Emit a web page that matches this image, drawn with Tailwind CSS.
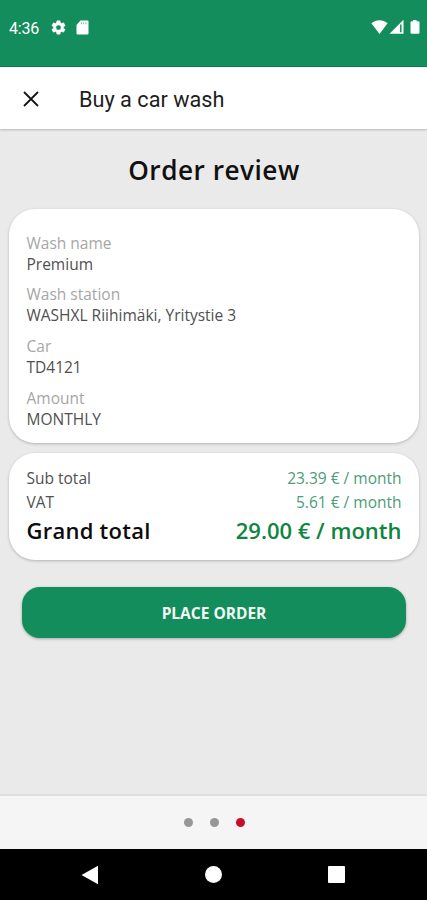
<!DOCTYPE html>
<html lang="en">
<head>
<meta charset="utf-8">
<meta name="viewport" content="width=device-width, initial-scale=1">
<title>Buy a car wash</title>
<script src="https://cdn.jsdelivr.net/npm/@tailwindcss/browser@4"></script>
</head>
<body class="font-['Open_Sans',sans-serif] bg-[#eaeaea]">
<div class="flex h-[900px] w-[427px] flex-col overflow-hidden bg-[#eaeaea] text-[15.5px] text-[#505050]">
  <header class="flex h-[67px] shrink-0 items-start justify-between bg-[#138d5b] pt-[18px] pr-[6px] pl-[9px] text-white shadow-[inset_0_-1px_0_#0f7f50]">
    <div class="flex items-center">
      <span class="w-[40px] pt-px font-['Roboto',sans-serif] text-[16px] leading-[19px] tracking-[-0.2px]">4:36</span>
      <svg class="-mt-px ml-px h-[17px] w-[17px]" viewBox="0 0 24 24" fill="currentColor"><path d="M19.14 12.94c.04-.3.06-.61.06-.94s-.02-.64-.07-.94l2.03-1.58a.49.49 0 0 0 .12-.61l-1.92-3.32a.49.49 0 0 0-.59-.22l-2.39.96a7 7 0 0 0-1.62-.94l-.36-2.54A.48.48 0 0 0 13.920 2.400h-3.840a.48.48 0 0 0-.47.41l-.36 2.54c-.59.24-1.130.57-1.620.94l-2.390-.96a.48.48 0 0 0-.59.22L2.740 8.870a.48.48 0 0 0 .12.61l2.030 1.580c-.05.3-.09.63-.09.94s.02.64.07.94l-2.030 1.580a.49.49 0 0 0-.12.61l1.920 3.320c.12.22.37.29.59.22l2.390-.96c.5.38 1.030.7 1.620.94l.36 2.540c.05.24.24.41.47.41h3.840c.24 0 .44-.17.47-.41l.36-2.540c.59-.24 1.130-.56 1.620-.94l2.390.96c.22.08.47 0 .59-.22l1.920-3.320a.48.48 0 0 0-.12-.61zM12 15.600a3.600 3.600 0 1 1 0-7.200 3.600 3.600 0 0 1 0 7.200z" stroke="currentColor" stroke-width=".6"/></svg>
      <svg class="-mt-[2px] ml-[9px] h-[15px] w-[13px]" viewBox="0 0 13 15"><path d="M4.500.5h7a1 1 0 0 1 1 1v12a1 1 0 0 1-1 1h-10a1 1 0 0 1-1-1V5z" fill="#fff"/><path d="M5.500 2.300v2M7.700 2.300v2M9.900 2.300v2" stroke="#7fbfa3" stroke-width="1"/></svg>
    </div>
    <div class="flex items-center pt-px">
      <svg class="h-[16px] w-[17px]" viewBox="0 0 17 16"><path d="M8.500 15L.4 4.300C5 .2 12 .2 16.600 4.300z" fill="#fff"/></svg>
      <svg class="ml-px h-[16px] w-[15px]" viewBox="0 0 15 16"><path d="M14.500.8v14H.5z" fill="#fff"/><path d="M11.800 5.500v7.800" stroke="#138d5b" stroke-width="1.500"/></svg>
      <svg class="ml-[6px] h-[16px] w-[11px]" viewBox="0 0 11 16"><path d="M3 .9h3.500v1.300h2a1 1 0 0 1 1 1v10.600a1 1 0 0 1-1 1H1.500a1 1 0 0 1-1-1V3.200a1 1 0 0 1 1-1H3z" fill="#fff"/></svg>
    </div>
  </header>

  <div class="z-10 flex h-[62px] shrink-0 items-center bg-white pt-[2px] pl-[22px] shadow-[0_1px_2px_rgba(0,0,0,0.22)]">
    <svg class="h-[18px] w-[18px]" viewBox="0 0 18 18" fill="none" stroke="#161616" stroke-width="1.800"><path d="M2 2l14 14M16 2L2 16"/></svg>
    <h1 class="ml-[39px] pt-px font-['Roboto',sans-serif] text-[21.7px] leading-[28px] text-[#1e1e1e]">Buy a car wash</h1>
  </div>

  <main class="flex flex-1 flex-col pr-[8px] pl-[9px]">
    <h2 class="mt-[23px] text-center text-[26.2px] leading-[36px] font-semibold tracking-[0.5px] text-[#111]">Order review</h2>

    <section class="mt-[21px] h-[234px] rounded-[26px] bg-white px-[17.5px] pt-[23.6px] shadow-[0_1px_3px_rgba(0,0,0,0.24)]">
      <dl class="flex flex-col gap-[10px] leading-[20.900px]">
        <div><dt class="text-[#a6a6a6]">Wash name</dt><dd>Premium</dd></div>
        <div><dt class="text-[#a6a6a6]">Wash station</dt><dd>WASHXL Riihimäki, Yritystie 3</dd></div>
        <div><dt class="text-[#a6a6a6]">Car</dt><dd>TD4121</dd></div>
        <div><dt class="text-[#a6a6a6]">Amount</dt><dd>MONTHLY</dd></div>
      </dl>
    </section>

    <section class="mt-[10px] h-[107px] rounded-[26px] bg-white px-[17.5px] pt-[14px] shadow-[0_1px_3px_rgba(0,0,0,0.24)]">
      <div class="flex h-[24px] items-center justify-between"><span>Sub total</span><span class="text-[#4c9d78]">23.39 € / month</span></div>
      <div class="flex h-[24px] items-center justify-between"><span>VAT</span><span class="text-[#4c9d78]">5.61 € / month</span></div>
      <div class="flex h-[30px] items-center justify-between text-[22px] font-semibold"><span class="tracking-[0.25px] text-[#0c0c0c]">Grand total</span><span class="text-[#0f8540]">29.00 € / month</span></div>
    </section>

    <button class="mx-[13px] mt-[27px] h-[51px] rounded-[18px] bg-[#138d5b] pt-[2px] text-[15.5px] font-bold text-[#f4fbf5] shadow-[0_1px_3px_rgba(0,0,0,0.3)]">PLACE ORDER</button>
  </main>

  <footer class="flex h-[55px] shrink-0 items-center justify-center gap-[17px] border-t-2 border-[#dfdfdf] bg-[#f5f5f5] pl-px">
    <i class="size-[9px] rounded-full bg-[#969696]"></i>
    <i class="size-[9px] rounded-full bg-[#969696]"></i>
    <i class="size-[9px] rounded-full bg-[#c50f2c]"></i>
  </footer>
  <nav class="flex h-[51px] shrink-0 items-center justify-between bg-black pr-[82px] pl-[81px]">
    <svg class="h-[20px] w-[18px]" viewBox="0 0 18 20"><path d="M.5 10L17 .8v18.400z" fill="#fff"/></svg>
    <i class="size-[17px] rounded-full bg-white"></i>
    <i class="size-[17px] rounded-[1px] bg-white"></i>
  </nav>
</div>
</body>
</html>
